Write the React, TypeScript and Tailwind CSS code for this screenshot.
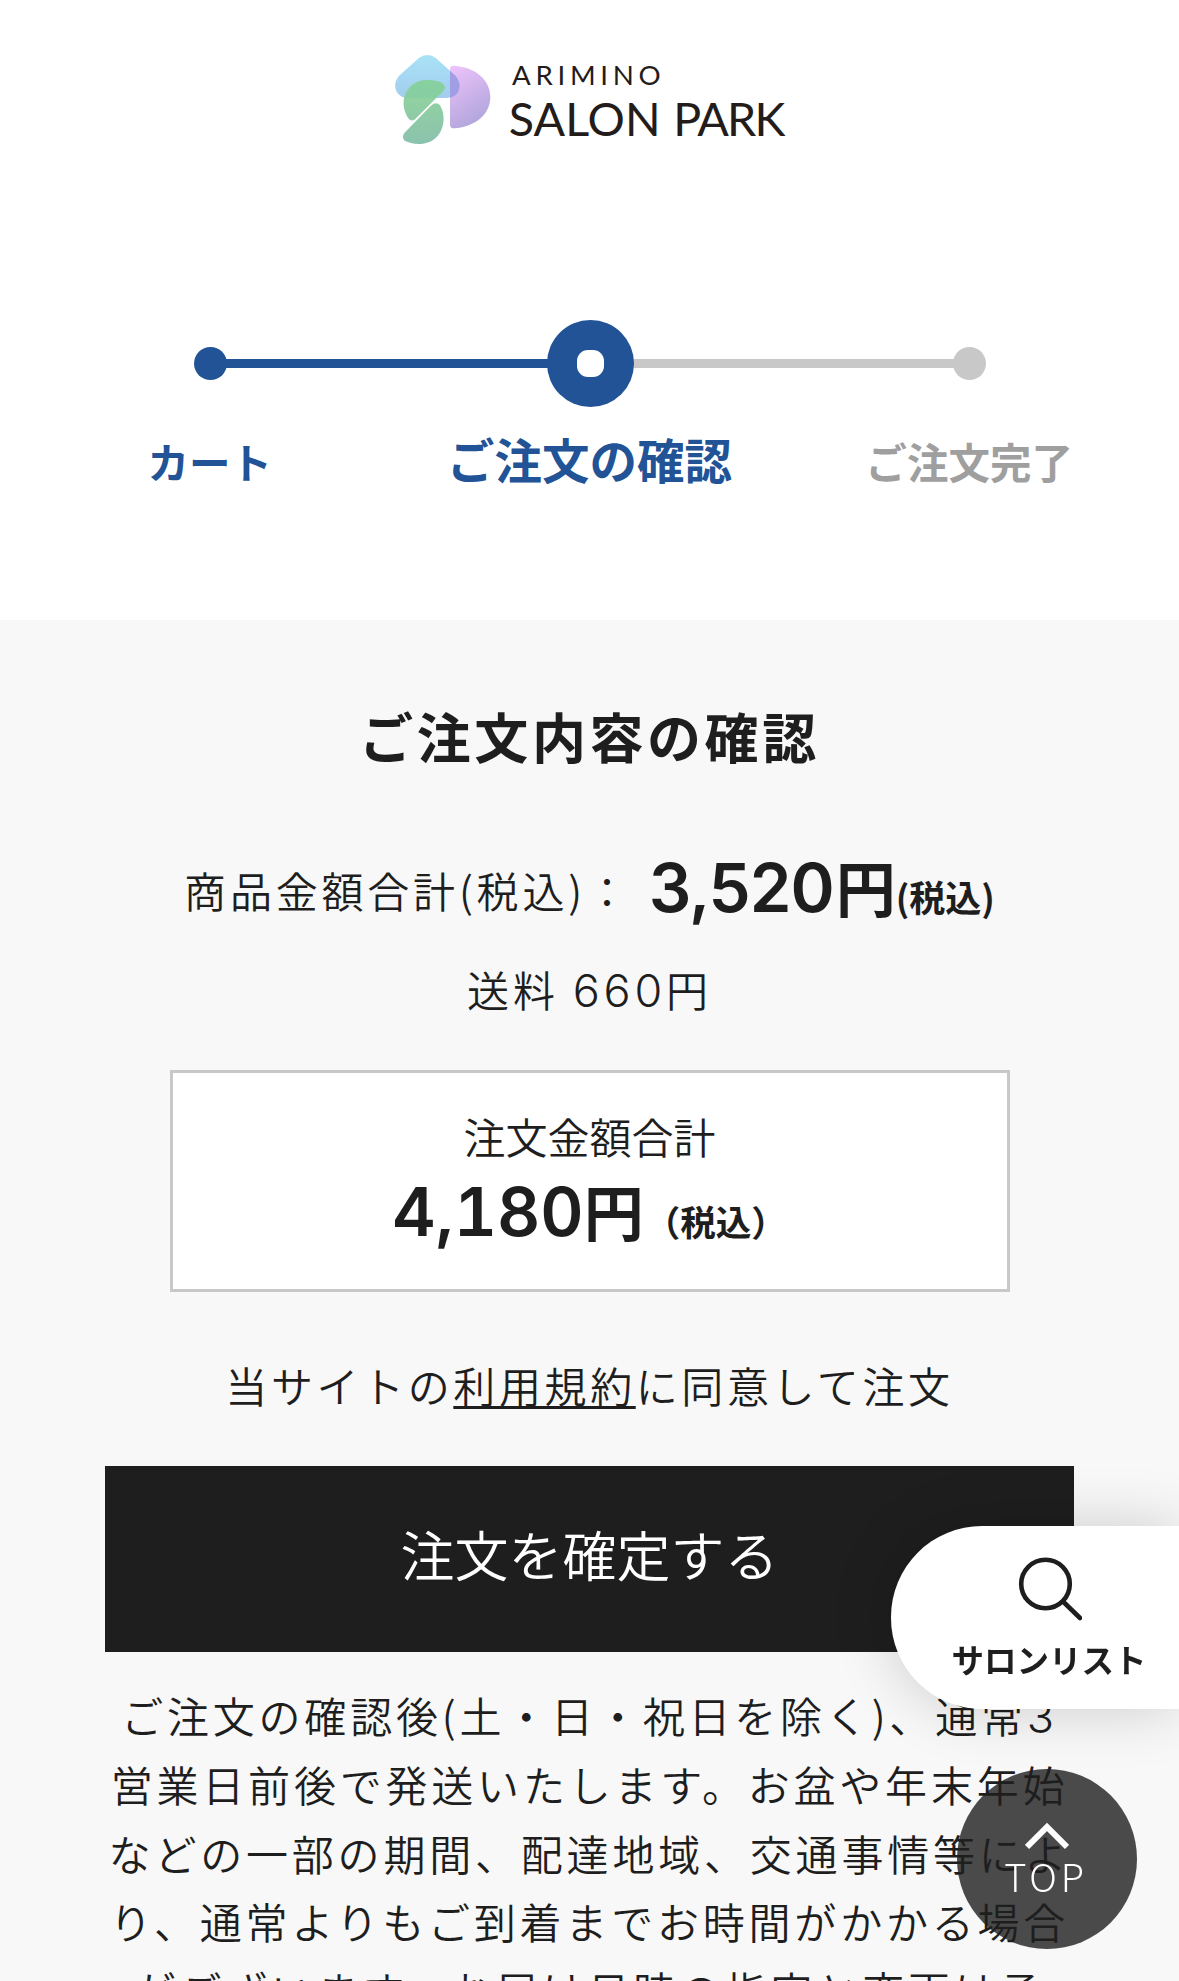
import { twMerge } from 'tailwind-merge'

type StepState = 'done' | 'current' | 'upcoming'

const steps: { label: string; state: StepState }[] = [
  { label: 'カート', state: 'done' },
  { label: 'ご注文の確認', state: 'current' },
  { label: 'ご注文完了', state: 'upcoming' },
]

const noticeLines = [
  '営業日前後で発送いたします。お盆や年末年始',
  'などの一部の期間、配達地域、交通事情等によ',
  'り、通常よりもご到着までお時間がかかる場合',
  'がございます。お届け日時の指定と変更は承',
]

function Logo() {
  return (
    <svg viewBox="0 0 1260 360" className="h-[120px] w-[420px]" role="img" aria-label="ARIMINO SALON PARK">
      <defs>
        <linearGradient id="roof" x1="0" y1="0" x2="0" y2="1">
          <stop offset="0" stopColor="#a8e2f6" />
          <stop offset="1" stopColor="#a3cdee" />
        </linearGradient>
        <linearGradient id="petal" x1="0" y1="0" x2="0.4" y2="1">
          <stop offset="0" stopColor="#efc4fb" />
          <stop offset="1" stopColor="#b2a6dc" />
        </linearGradient>
        <linearGradient id="leaf" gradientUnits="userSpaceOnUse" x1="0" y1="120" x2="0" y2="312">
          <stop offset="0" stopColor="#93d79b" />
          <stop offset="1" stopColor="#8bc2ae" />
        </linearGradient>
      </defs>
      <path
        d="M210 88 Q210 76 222 77 C290 82 331 122 331 171 C331 220 290 260 222 265 Q210 265 210 254 Z"
        fill="url(#petal)"
      />
      <path
        d="M116 55 Q142 35 168 55 L225 106 C250 134 234 174 198 174 H84 C48 174 32 134 59 106 Z"
        fill="url(#roof)"
      />
      <path d="M210 93 L225 106 C250 134 238 168 210 173 Z" fill="#a19ee3" />
      <path
        d="M184 128 Q202 139 189 154 L106 237 Q94 247 85 235 C52 186 78 120 140 120 Q168 120 184 128 Z"
        fill="url(#leaf)"
      />
      <path
        d="M74 174 C84 140 108 120 140 120 Q168 120 184 128 Q202 139 189 154 L169 174 Z"
        fill="#83cda3"
        opacity="0.7"
      />
      <path
        d="M154 196 Q170 184 180 196 C196 222 194 260 176 284 C150 319 100 316 74 302 Q64 292 73 279 Z"
        fill="url(#leaf)"
      />
      <g className="fill-[#231c1a] font-['Lato',sans-serif]">
        <text x="396" y="135" fontSize="83" textLength="446">
          ARIMINO
        </text>
        <text x="386" y="288" fontSize="140" textLength="456">
          SALON
        </text>
        <text x="880" y="288" fontSize="140" textLength="336">
          PARK
        </text>
      </g>
    </svg>
  )
}

function StepMarker({ state }: { state: StepState }) {
  if (state === 'current') {
    return (
      <span className="z-10 flex size-[87px] items-center justify-center rounded-full bg-[#215396]">
        <span className="size-[27px] rounded-[11px] bg-white" />
      </span>
    )
  }
  return (
    <span className={twMerge('size-[33px] rounded-full', state === 'done' ? 'bg-[#215396]' : 'bg-[#c8c8c8]')} />
  )
}

function Progress() {
  return (
    <div className="px-[20px]">
      <div className="flex items-center pr-[173px] pl-[174px]">
        <StepMarker state="done" />
        <span className="-mx-px h-[9px] flex-1 bg-[#215396]" />
        <StepMarker state="current" />
        <span className="-mx-px h-[9px] flex-1 bg-[#c8c8c8]" />
        <StepMarker state="upcoming" />
      </div>
      <ol className="mt-[19px] grid grid-cols-3">
        {steps.map((step) => (
          <li
            key={step.label}
            className={twMerge(
              'flex h-[70px] items-center justify-center text-[41.5px] font-bold whitespace-nowrap text-[#215396]',
              step.state === 'current' && 'pb-[4px] text-[47.5px]',
              step.state === 'upcoming' && 'text-[#9f9f9f]',
            )}
          >
            {step.label}
          </li>
        ))}
      </ol>
    </div>
  )
}

function Total() {
  return (
    <div className="mx-auto flex h-[222px] w-[840px] flex-col items-center border-3 border-[#c8c8c8] bg-white pt-[33px]">
      <p className="text-[42px]/[60px] font-[350]">注文金額合計</p>
      <p className="flex items-baseline font-bold">
        <span className="font-['Inter',sans-serif] text-[67px]/[88px] font-semibold tabular-nums">4,180</span>
        <span className="text-[60px]/[88px]">円</span>
        <span className="ml-px text-[35.5px]/[88px]">（税込）</span>
      </p>
    </div>
  )
}

function SalonListTab() {
  return (
    <a
      href="#salons"
      className="fixed top-[1526px] right-0 flex h-[183px] w-[288px] flex-col items-center rounded-l-[91px] bg-white pt-[30px] pl-[28px] shadow-[0_0_60px_rgba(0,0,0,0.18)]"
    >
      <svg viewBox="0 0 66 66" className="size-[66px]" fill="none" stroke="#1e1e1e" strokeWidth="4.6">
        <circle cx="29.500" cy="28" r="24.300" />
        <path d="M47 45.500 L64 62" strokeLinecap="round" />
      </svg>
      <span className="mt-[13px] text-[32.5px]/[48px] font-bold whitespace-nowrap">サロンリスト</span>
    </a>
  )
}

function BackToTop() {
  return (
    <a
      href="#top"
      className="fixed top-[1769px] right-[42px] flex size-[180px] flex-col items-center rounded-full bg-[#1e1e1e]/80 pt-[53px] text-white"
    >
      <svg viewBox="0 0 44 28" className="h-[28px] w-[44px]" fill="none" stroke="currentColor" strokeWidth="6">
        <path d="M2 25 L22 5 L42 25" />
      </svg>
      <span className="-ml-[2px] text-[38px]/[52px] font-light tracking-[0.1em]">TOP</span>
    </a>
  )
}

export default function App() {
  return (
    <div
      id="top"
      className="h-[1981px] w-[1179px] overflow-hidden bg-white font-['Noto_Sans_CJK_JP',sans-serif] text-[#1e1e1e]"
    >
      <header className="flex h-[320px] justify-center pt-[40px]">
        <Logo />
      </header>
      <div className="h-[300px]">
        <Progress />
      </div>

      <main className="h-[1361px] overflow-hidden bg-[#f8f8f8] px-[105px] pt-[76px]">
        <h1 className="text-center text-[54px]/[80px] font-bold tracking-[0.066em]">ご注文内容の確認</h1>

        <p className="mt-[60px] flex h-[100px] items-baseline justify-center whitespace-nowrap">
          <span className="-translate-y-1 text-[42px]/[100px] font-[350] tracking-[3.8px]">商品金額合計(税込)：</span>
          <span className="ml-[17px] font-['Inter',sans-serif] text-[67px]/[100px] font-semibold tracking-[-1px]">
            3,520
          </span>
          <span className="ml-[2px] text-[60px]/[100px] font-bold">円</span>
          <span className="text-[36px]/[100px] font-bold">(税込)</span>
        </p>
        <p className="mt-[3px] flex h-[99px] items-baseline justify-center text-[42px]/[99px] font-[350] tracking-[3.8px]">
          送料
          <span className="ml-[14px] font-['Inter',sans-serif] text-[45px] font-light">660</span>円
        </p>

        <div className="mt-[32px]">
          <Total />
        </div>

        <p className="mt-[58px] text-center text-[42px]/[70px] font-[350] tracking-[3.6px]">
          当サイトの
          <a href="#terms" className="underline decoration-3 underline-offset-[3px] [text-decoration-skip-ink:none]">
            利用規約
          </a>
          に同意して注文
        </p>
        <button
          type="button"
          className="mt-[46px] block h-[186px] w-full bg-[#1e1e1e] pb-[11px] text-[54px] font-[350] text-white"
        >
          注文を確定する
        </button>

        <div className="mt-[29px] text-center text-[42px]/[68.8px] font-[350] tracking-[3.8px] whitespace-nowrap">
          <p>
            ご注文の確認後(土・日・祝日を除く)、通常
            <span className="font-['Inter',sans-serif] text-[45px]/[1] font-light">3</span>
          </p>
          {noticeLines.map((line) => (
            <p key={line}>{line}</p>
          ))}
        </div>
      </main>

      <SalonListTab />
      <BackToTop />
    </div>
  )
}
